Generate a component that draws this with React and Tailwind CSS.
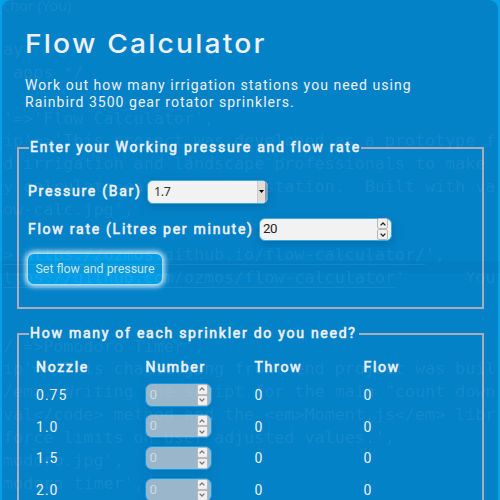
const codeLines = [
  ['top-[38px]', 'ay('],
  ['top-[61px]', ' apps */'],
  ['top-[107px]', "'=>'Flow Calculator',"],
  ['top-[129px]', "ip'=>'This project was developed as a prototype f"],
  ['top-[152px]', 'd irrigation and landscape professionals to make'],
  ['top-[175px]', 'y calculate each watering station.  Built with va'],
  ['top-[198px]', "ow-calc.jpg',"],
  ['top-[243px]', "> https://ozmos.github.io/flow-calculator/',", 'w-[422px] border-b'],
  ['top-[266px]', "ttps://github.com/ozmos/flow-calculator'      You", 'w-[392px] border-b'],
  ['top-[335px]', "/'=>Pomodoro Timer',"],
  ['top-[357px]', "ip'=>'This challenging front end project was buil"],
  ['top-[380px]', '/em>. Writing the script for the main "count down'],
  ['top-[403px]', 'val</code> method and the <em>Moment.js</em> libr'],
  ['top-[426px]', "force limits on user adjusted values.',"],
  ['top-[449px]', "modoro.jpg',"],
  ['top-[472px]', "modoro timer',"],
];

function CodeBackdrop() {
  return (
    <div
      aria-hidden="true"
      className="pointer-events-none absolute inset-0 overflow-hidden whitespace-pre text-[16.7px] leading-[22px] tracking-normal text-[#ffffff12] font-['DejaVu_Sans_Mono',monospace]"
    >
      <div className="absolute inset-x-0 top-[261px] h-3 bg-[#00000007]" />
      <div className="absolute left-[3px] top-[-6px] text-[14.5px] font-['Noto_Sans',sans-serif]">chor (You)</div>
      {codeLines.map(([top, text, line]) => (
        <div key={top} className={`absolute left-[3px] h-[22px] border-[#ffffff12] ${top} ${line || ''}`}>
          {text}
        </div>
      ))}
    </div>
  );
}

const strong = 'tracking-[1.74px] [-webkit-text-stroke:0.6px_currentColor] whitespace-nowrap';

function Chevron({ up, dim }) {
  return (
    <span className="flex h-[11px] w-[11px] items-center justify-center rounded-[2px] border border-[#b9b9b9] bg-[#f0f0f0]">
      <svg width="6" height="4" viewBox="0 0 6 4" fill="none" stroke={dim ? '#777' : '#222'} strokeWidth="1.3">
        <path d={up ? 'M.6 3.4 3 1l2.4 2.4' : 'M.6.6 3 3 5.4.6'} />
      </svg>
    </span>
  );
}

function Spinner({ dim }) {
  return (
    <span className="flex flex-col">
      <Chevron up dim={dim} />
      <Chevron dim={dim} />
    </span>
  );
}

function Nozzle({ size }) {
  return (
    <div className="grid h-[31.6px] grid-cols-[109.5px_109px_109px_1fr] items-center">
      <span className="pt-[2px]">{size}</span>
      <span className="-ml-px flex h-[24px] w-[67px] items-center justify-between rounded-[7px] border border-[#08a0ea] bg-[#9ab6ca] pl-[4px] pr-[3px] text-[13.33px] tracking-normal text-[#cddbe5] shadow-[0_2px_8px_#005b9055]">
        0<Spinner dim />
      </span>
      <span className="pt-[2px]">0</span>
      <span className="pt-[2px]">0</span>
    </div>
  );
}

export default function App() {
  return (
    <div className="h-[500px] w-[500px] overflow-hidden bg-[#02a1e9] px-[2px] font-[Roboto,sans-serif] text-[14px] tracking-[1.03px] text-[#eef0f3]">
      <main className="h-[520px] rounded-t-[9px] bg-[#0482c8] px-[15px] pt-[27px]">
        <h1 className="ml-[8px] h-[34px] w-max origin-left scale-x-[1.08] whitespace-nowrap text-[26.2px] font-medium leading-[34px] tracking-[2px] font-[Inter,sans-serif]">
          Flow Calculator
        </h1>
        <p className="ml-[8px] mt-[16px] h-[34px] w-[440px] leading-[17px]">
          Work out how many irrigation stations you need using
          <br />
          Rainbird 3500 gear rotator sprinklers.
        </p>

        <fieldset className="mt-[28px] h-[170px] w-[467px] border-2 border-[#adabb9] px-[9px]">
          <legend className={`ml-[1px] h-[17px] pl-[1px] leading-[17px] ${strong}`}>
            Enter your Working pressure and flow rate
          </legend>
          <div className="mt-[23px] flex h-[25px] items-center">
            <label className={`w-[119px] ${strong}`}>Pressure (Bar)</label>
            <span className="flex h-[24px] w-[121px] items-center justify-between overflow-hidden rounded-[6px] border border-[#39a9e2] bg-[#f2f2f2] pl-[6px] text-[12.5px] tracking-[-0.4px] text-[#333] shadow-[0_3px_9px_#00507f66]">
              <span className="pt-[2px] font-['Noto_Sans',sans-serif]">1.7</span>
              <span className="flex h-full w-[10px] items-center justify-center border-l border-r-2 border-[#ccc] border-r-[#999] bg-[#deddd9]">
                <svg width="5" height="3" viewBox="0 0 5 3"><path d="M0 0h5L2.5 3z" fill="#000" /></svg>
              </span>
            </span>
          </div>
          <div className="mt-[13px] flex h-[24px] items-center">
            <label className={`w-[231px] ${strong}`}>Flow rate (Litres per minute)</label>
            <span className="flex h-[23px] w-[133px] items-center justify-between rounded-[6px] border border-[#39a9e2] bg-[#f2f2f2] px-[3px] text-[13.33px] tracking-[-0.4px] text-[#222] shadow-[0_3px_9px_#00507f66]">
              20<Spinner />
            </span>
          </div>
          <button className="-ml-px mt-[12px] h-[32px] w-[136px] whitespace-nowrap rounded-[7px] border border-[#a5ddf5] bg-[#049de5] pt-px text-[12.4px] tracking-normal text-[#d5ebf7] shadow-[0_0_5px_2px_#c5e7f5]">
            Set flow and pressure
          </button>
        </fieldset>

        <fieldset className="mt-[16px] h-[240px] w-[467px] border-2 border-[#adabb9] px-[17px]">
          <legend className={`ml-[-7px] h-[17px] pl-[1px] pr-[2px] leading-[17px] ${strong}`}>
            How many of each sprinkler do you need?
          </legend>
          <div className={`mt-[15px] grid h-[17px] grid-cols-[109.5px_109px_109px_1fr] items-center ${strong}`}>
            <span>Nozzle</span>
            <span>Number</span>
            <span>Throw</span>
            <span>Flow</span>
          </div>
          <div className="mt-[5px]">
            <Nozzle size="0.75" />
            <Nozzle size="1.0" />
            <Nozzle size="1.5" />
            <Nozzle size="2.0" />
          </div>
        </fieldset>
      </main>
      <CodeBackdrop />
    </div>
  );
}
